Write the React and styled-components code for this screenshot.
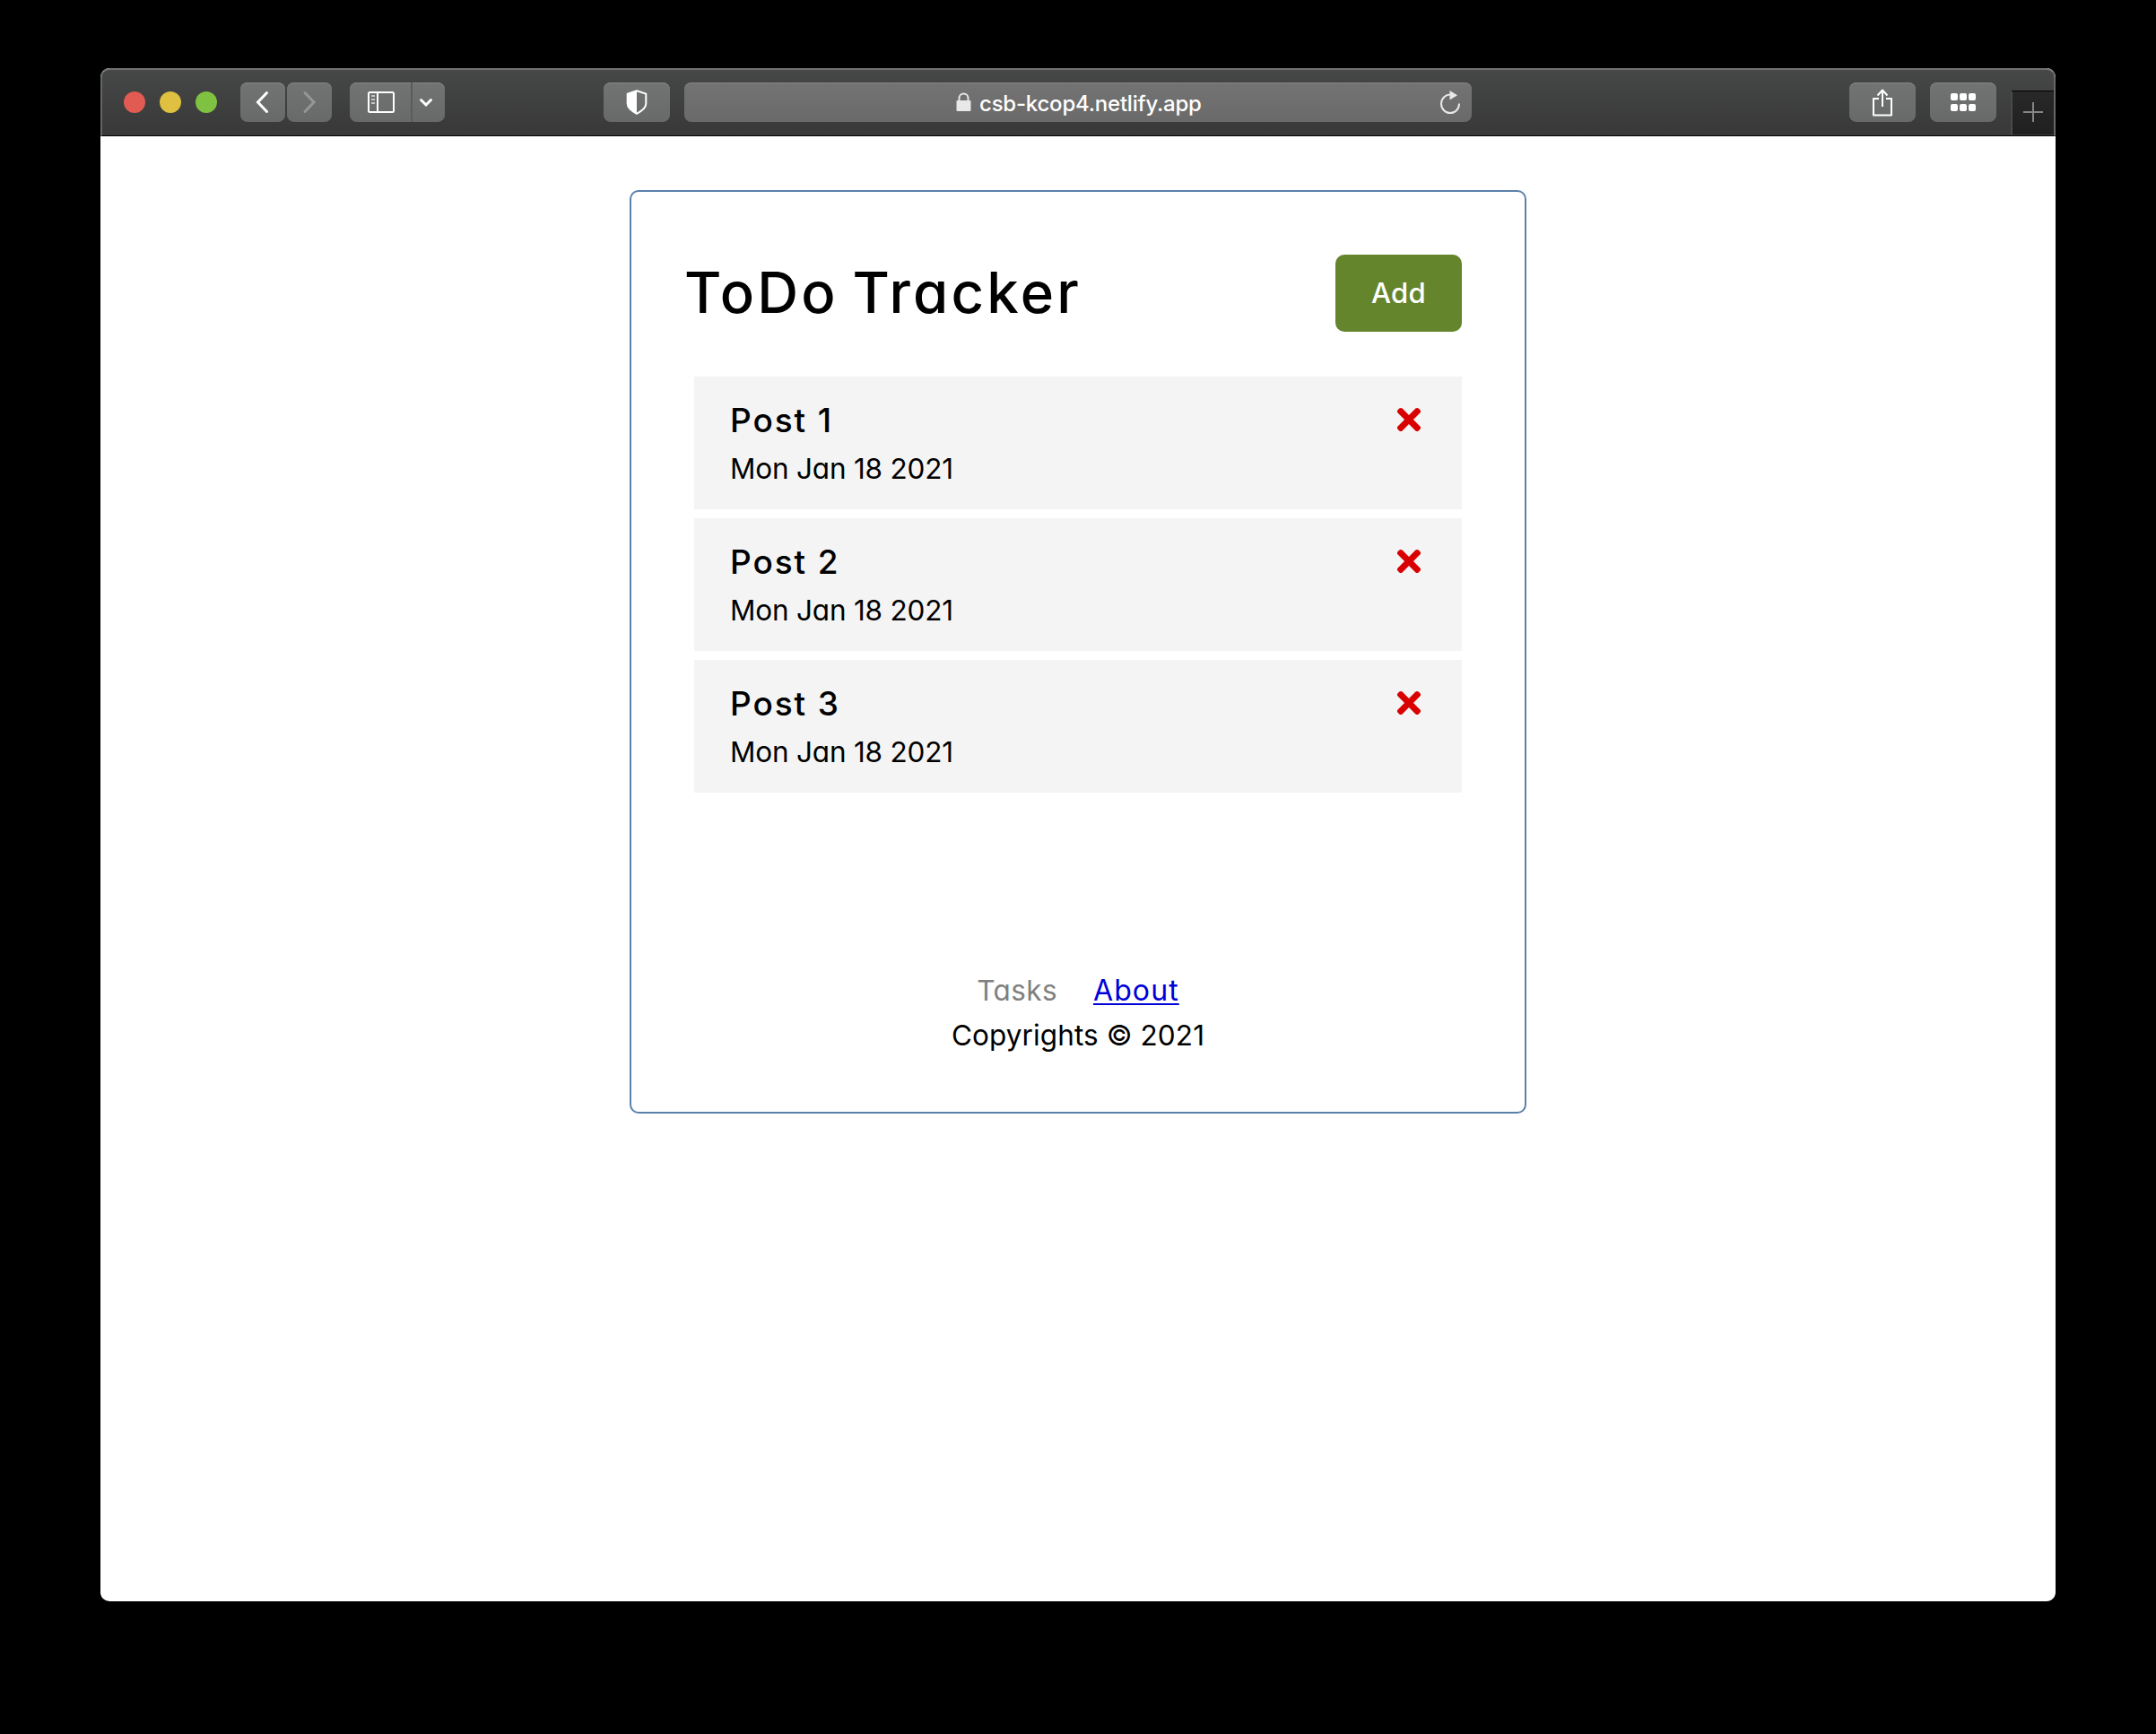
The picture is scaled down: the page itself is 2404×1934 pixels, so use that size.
import React from "react";
import styled, { createGlobalStyle } from "styled-components";
import { FaTimes } from "react-icons/fa";

const GlobalStyle = createGlobalStyle`
  *, *::before, *::after { box-sizing: border-box; }
  body {
    margin: 0;
    background: #000;
    color: #000;
    font-family: Inter, "Liberation Sans", sans-serif;
    font-feature-settings: "cv11";
    -webkit-font-smoothing: antialiased;
  }
`;

const Desktop = styled.div`
  height: 1934px;
  padding: 76px 112px 148px;
  background: #000;
`;

const Window = styled.div`
  display: flex;
  flex-direction: column;
  height: 1710px;
  border-radius: 10px;
  overflow: hidden;
  background: #fff;
`;

const Toolbar = styled.header`
  display: flex;
  align-items: flex-start;
  height: 76px;
  flex: none;
  padding: 14px 0 0 24px;
  border: 2px solid #666;
  border-top-color: #707170;
  border-bottom: 1px solid #000;
  border-radius: 10px 10px 0 0;
  background: linear-gradient(#464747, #383838);
`;

const Lights = styled.div`
  display: flex;
  align-items: center;
  gap: 16px;
  height: 44px;
  margin-right: 26px;
`;

const Light = styled.span`
  width: 24px;
  height: 24px;
  border-radius: 50%;
  background: ${(p) => p.$color};
`;

const ToolButton = styled.button`
  display: flex;
  align-items: center;
  justify-content: center;
  flex: none;
  width: ${(p) => p.$width}px;
  height: 44px;
  margin: 0 ${(p) => p.$after || 0}px 0 0;
  padding: 0;
  border: 0;
  border-radius: 8px;
  background: linear-gradient(#727373, #686969);
  box-shadow: inset 0 1px 0 #858686;
`;

const SplitButton = styled(ToolButton)`
  justify-content: flex-start;
`;

const SplitPart = styled.span`
  display: flex;
  align-items: center;
  justify-content: center;
  width: ${(p) => p.$width}px;
  height: 44px;
  padding: ${(p) => (p.$divided ? "0 6px 0 0" : "0 0 0 2px")};
  border-left: ${(p) => (p.$divided ? "2px solid #5a5b5b" : "0")};
`;

const AddressBar = styled.div`
  display: flex;
  align-items: center;
  width: 878px;
  height: 44px;
  margin-right: 421px;
  padding: 0 12px 0 303px;
  border-radius: 8px;
  background: linear-gradient(#737373, #6a6a6a);
  box-shadow: inset 0 1px 0 #858686;
`;

const Address = styled.span`
  flex: 1;
  margin-left: 9px;
  padding-top: 3px;
  color: #fff;
  font-size: 24px;
  line-height: 32px;
  letter-spacing: -0.22px;
  font-weight: 500;
  font-feature-settings: normal;
  white-space: nowrap;
`;

const NewTab = styled.button`
  display: flex;
  align-items: center;
  justify-content: center;
  width: 48px;
  height: 50px;
  margin: 9px 0 0;
  padding: 0 0 2px;
  border: 0;
  border-top: 1px solid #000;
  border-left: 2px solid #484949;
  border-bottom: 1px solid #3c3c3c;
  background: linear-gradient(#282828, #202020);
`;

const Page = styled.main`
  display: flex;
  justify-content: center;
  align-items: flex-start;
  flex: 1;
  padding-top: 60px;
`;

const Card = styled.section`
  width: 1000px;
  height: 1030px;
  padding: 70px;
  border: 2px solid #5b80ac;
  border-radius: 10px;
`;

const CardHeader = styled.div`
  display: flex;
  align-items: center;
  justify-content: space-between;
  height: 86px;
  margin: 0 0 50px -11px;
`;

const Title = styled.h1`
  margin: 0;
  font-size: 63.5px;
  font-weight: 500;
  line-height: 84px;
  padding-bottom: 2px;
  letter-spacing: 3.2px;
  word-spacing: -4.5px;
  white-space: nowrap;
`;

const AddButton = styled.button`
  width: 141px;
  height: 86px;
  padding: 0 0 2px;
  border: 0;
  border-radius: 10px;
  background: #64852c;
  color: #fff;
  font: inherit;
  font-feature-settings: inherit;
  font-size: 31px;
  font-weight: 500;
  letter-spacing: 0.3px;
`;

const List = styled.div`
  display: flex;
  flex-direction: column;
  gap: 10px;
`;

const Task = styled.article`
  height: 148px;
  padding: 20px 40px 18px;
  background: #f4f4f4;
`;

const TaskHead = styled.h3`
  display: flex;
  align-items: center;
  justify-content: space-between;
  height: 56px;
  margin: 0;
  font-size: 37px;
  font-weight: 500;
  letter-spacing: 1.9px;
`;

const DeleteIcon = styled(FaTimes)`
  color: #d90000;
  font-size: 38px;
`;

const TaskDate = styled.p`
  margin: 0;
  font-size: 31.5px;
  line-height: 54px;
  letter-spacing: -0.2px;
`;

const Footer = styled.footer`
  margin-top: 196px;
  font-size: 31.5px;
  line-height: 50px;
  text-align: center;
`;

const Nav = styled.nav`
  display: flex;
  justify-content: center;
  gap: 40px;
`;

const Current = styled.span`
  color: #808080;
  letter-spacing: 0.4px;
`;

const NavLink = styled.a`
  color: #0000d9;
  font-size: 32px;
  letter-spacing: 1.1px;
  text-decoration: underline;
  text-decoration-thickness: 2px;
  text-underline-offset: 3px;
`;

const Copyright = styled.p`
  margin: 0;
  letter-spacing: 0.1px;
`;

const Chevron = ({ d, w, h, color = "#fff" }) => (
  <svg width={w} height={h} viewBox={`0 0 ${w} ${h}`} fill="none" stroke={color} strokeWidth="3" strokeLinecap="round" strokeLinejoin="miter">
    <path d={d} />
  </svg>
);

const SidebarIcon = () => (
  <svg width="30" height="24" viewBox="0 0 30 24" fill="none" stroke="#fff" strokeWidth="2">
    <rect x="1" y="1" width="28" height="22" rx="1.5" />
    <path d="M11 1v22" />
    <path d="M4 5h4M4 9h4M4 13h4" stroke="#c4c4c4" />
  </svg>
);

const ShieldIcon = () => (
  <svg width="24" height="28" viewBox="0 0 24 28">
    <path d="M12 1.200 22.300 4.600v11.200c0 4.600-4.700 8-10.300 11-5.600-3-10.300-6.400-10.300-11V4.600z" fill="none" stroke="#fff" strokeWidth="2" strokeLinejoin="round" />
    <path d="M12 1v26C6 24 1.700 20.400 1.700 16V4.500z" fill="#fff" />
  </svg>
);

const LockIcon = () => (
  <svg width="17" height="22" viewBox="0 0 17 22">
    <path d="M3.500 10V6.500a5 5 0 0 1 10 0V10" fill="none" stroke="#e8e8e8" strokeWidth="2" />
    <rect x="0.500" y="9" width="16" height="12" rx="1" fill="#e8e8e8" />
  </svg>
);

const ReloadIcon = () => (
  <svg width="24" height="28" viewBox="0 0 24 28">
    <path d="M12.500 5.500a10 10.300 0 1 0 9.500 10" fill="none" stroke="#e8e8e8" strokeWidth="2" />
    <path d="M11.500 1v10.600L20 6.300z" fill="#e8e8e8" />
  </svg>
);

const ShareIcon = () => (
  <svg width="24" height="32" viewBox="0 0 24 32" fill="none" stroke="#fff" strokeWidth="2" strokeLinejoin="round">
    <path d="M8 12H2v18.500h20V12h-6" />
    <path d="M12 21V3M6.500 8.500 12 2.500l5.500 6" />
  </svg>
);

const GridIcon = () => (
  <svg width="28" height="20" viewBox="0 0 28 20" fill="#fff">
    {[0, 10, 20].map((x) =>
      [0, 12].map((y) => <rect key={`${x}-${y}`} x={x} y={y} width="8" height="8" rx="2" />)
    )}
  </svg>
);

const PlusIcon = () => (
  <svg width="22" height="22" viewBox="0 0 22 22" stroke="#858585" strokeWidth="2">
    <path d="M11 0v22M0 11h22" />
  </svg>
);

const tasks = [
  { title: "Post 1", date: "Mon Jan 18 2021" },
  { title: "Post 2", date: "Mon Jan 18 2021" },
  { title: "Post 3", date: "Mon Jan 18 2021" },
];

export default function App() {
  return (
    <Desktop>
      <GlobalStyle />
      <Window>
        <Toolbar>
          <Lights>
            <Light $color="#e15b53" />
            <Light $color="#dfc040" />
            <Light $color="#7fc241" />
          </Lights>
          <ToolButton $width={50} $after={2}>
            <Chevron w={16} h={26} d="M12.500 2.500 2.500 13l10 10.500" />
          </ToolButton>
          <ToolButton $width={50} $after={20}>
            <Chevron w={16} h={26} d="M3 2.500 13 13 3 23.500" color="#969696" />
          </ToolButton>
          <SplitButton as="div" $width={106} $after={177}>
            <SplitPart $width={68}>
              <SidebarIcon />
            </SplitPart>
            <SplitPart $width={38} $divided>
              <Chevron w={16} h={12} d="M2.500 3.500 8 9l5.500-5.500" />
            </SplitPart>
          </SplitButton>
          <ToolButton $width={74} $after={16}>
            <ShieldIcon />
          </ToolButton>
          <AddressBar>
            <LockIcon />
            <Address>csb-kcop4.netlify.app</Address>
            <ReloadIcon />
          </AddressBar>
          <ToolButton $width={74} $after={16}>
            <ShareIcon />
          </ToolButton>
          <ToolButton $width={74} $after={16}>
            <GridIcon />
          </ToolButton>
          <NewTab>
            <PlusIcon />
          </NewTab>
        </Toolbar>
        <Page>
          <Card>
            <CardHeader>
              <Title>ToDo Tracker</Title>
              <AddButton>Add</AddButton>
            </CardHeader>
            <List>
              {tasks.map((task) => (
                <Task key={task.title}>
                  <TaskHead>
                    {task.title}
                    <DeleteIcon />
                  </TaskHead>
                  <TaskDate>{task.date}</TaskDate>
                </Task>
              ))}
            </List>
            <Footer>
              <Nav>
                <Current>Tasks</Current>
                <NavLink href="#about">About</NavLink>
              </Nav>
              <Copyright>Copyrights © 2021</Copyright>
            </Footer>
          </Card>
        </Page>
      </Window>
    </Desktop>
  );
}
